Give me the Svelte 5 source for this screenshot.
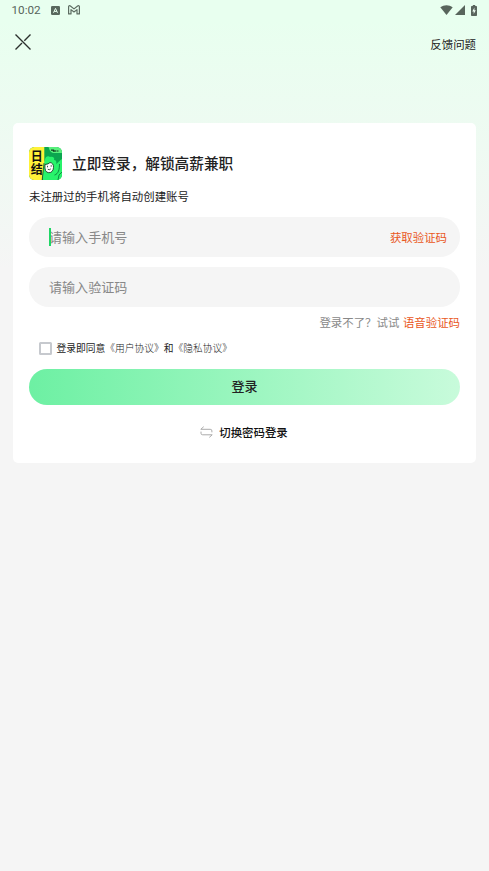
<script lang="ts">
	let phone = $state('');
	let code = $state('');
	let agreed = $state(false);
</script>

<main class="page">
	<header class="status">
		<div class="status-left">
			<span class="time">10:02</span>
			<svg class="badge" width="9" height="9" viewBox="0 0 9 9">
				<rect width="9" height="9" rx="1.3" fill="#58685d" />
				<path d="M2.5 6.8 4.5 2.4l2 4.4M3.2 5.4h2.6" fill="none" stroke="#e8ffef" stroke-width="1" />
			</svg>
			<svg width="12" height="10" viewBox="0 0 12 10" fill="none" stroke="#5c6c61" stroke-width="1.2" stroke-linejoin="round">
				<path d="M.6 8.9V1.7C.6.8 1.6.4 2.4 1L6 3.9 9.6 1c.8-.6 1.8-.2 1.8.7v7.2H9V4.6L6 7 3 4.6v4.3Z" />
			</svg>
		</div>
		<div class="status-right">
			<svg width="13" height="10" viewBox="0 0 13 10" fill="#58655c">
				<path d="M6.5 10 .3 2.3C4-.5 9-.5 12.7 2.3Z" />
			</svg>
			<svg width="10" height="10" viewBox="0 0 10 10" fill="#58655c">
				<path d="M10 0v10H0Z" />
			</svg>
			<svg class="battery" width="6" height="11" viewBox="0 0 6 11">
				<path d="M1.8 0h2.4v1H5.2q.8 0 .8.8v8.4q0 .8-.8.8H.8Q0 11 0 10.2V1.8Q0 1 .8 1h1Z" fill="#58655c" />
				<path d="M3.4 2.6 1.3 6.4h1.4v2.7l2.1-3.8H3.4Z" fill="#f0fff4" />
			</svg>
		</div>
	</header>

	<nav class="nav">
		<button class="close" aria-label="关闭">
			<svg width="16" height="16" viewBox="0 0 16 16" fill="none" stroke="#2b302d" stroke-width="1.35">
				<path d="M.5.5 15.5 15.5M.5 15.5 7 9M9.3 6.7 15.5.5" />
			</svg>
		</button>
		<button class="feedback">反馈问题</button>
	</nav>

	<section class="card">
		<div class="brand">
			<svg class="logo" width="33" height="33" viewBox="0 0 33 33">
				<defs>
					<clipPath id="logo-clip"><rect width="33" height="33" rx="5.5" /></clipPath>
				</defs>
				<g clip-path="url(#logo-clip)">
					<rect width="33" height="33" fill="#0ba64f" />
					<path d="M14 33V17l2-4c0-3 3-5 5-3 3-1 5 1 4 3 2 0 3 2 2 4 2-1 4-4 6-5v21Z" fill="#28f36b" />
					<path d="M19.5 0H33v6h-8q-4 0-5.5-6Z" fill="#58f07c" />
					<path d="M22 3.2h2.5v1.6M26 3v2M27.5 4h2" fill="none" stroke="#123c20" stroke-width="1.2" />
					<path d="M25.5 28c4-1 5-6 5-11M29 33l1-5 3-3" fill="none" stroke="#087438" stroke-width=".8" />
					<path d="M16 17.5q3.5-.2 5-2 3.8.8 3.5 5-.5 5.2-4.7 5.2-4.6-.2-3.8-8.2Z" fill="#fff" stroke="#132b1b" stroke-width=".8" />
					<path d="M18.5 18.8v1.5M22.2 18.2v1.5M18.8 22.3q1.7 1 3-.4" fill="none" stroke="#132b1b" stroke-width=".8" />
					<path d="M0 0h15.3v15L13 33H0Z" fill="#fff238" />
					<path d="m15 16-1.8 17" stroke="#174927" stroke-width=".8" />
					<text x="7.8" y="3.6">日结</text>
				</g>
			</svg>
			<h1>立即登录，解锁高薪兼职</h1>
		</div>
		<p class="hint">未注册过的手机将自动创建账号</p>

		<div class="field">
			<span class="caret"></span>
			<input type="tel" placeholder="请输入手机号" bind:value={phone} />
			<button class="link">获取验证码</button>
		</div>
		<div class="field">
			<input type="text" placeholder="请输入验证码" bind:value={code} />
		</div>

		<div class="help">登录不了？试试<button class="link">语音验证码</button></div>

		<label class="terms">
			<input type="checkbox" bind:checked={agreed} />
			<span>登录即同意<span class="doc">《用户协议》</span>和<span class="doc">《隐私协议》</span></span>
		</label>

		<button class="submit">登录</button>

		<button class="switch">
			<svg width="13" height="12" viewBox="0 0 13 12" fill="none" stroke="#aaa" stroke-width="1">
				<path d="M3.7.7.8 3.3h9.4q1.7 0 1.7 1.6v1.4M1 5.6v1.7q0 1.5 1.7 1.5h9.5L9.3 11.4" />
			</svg>
			切换密码登录
		</button>
	</section>
</main>

<style>
	:global(body) {
		margin: 0;
		background: #f5f5f5;
	}

	.page {
		box-sizing: border-box;
		min-height: 871px;
		background: linear-gradient(#e8ffef 0, #e8ffef 20px, #f5f5f5 270px);
		color: #222;
		font-family: 'Noto Sans CJK SC', sans-serif;
		font-size: 11.43px;
	}

	button,
	input {
		margin: 0;
		padding: 0;
		border: 0;
		background: none;
		color: inherit;
		font: inherit;
	}

	svg {
		display: block;
		flex: none;
	}

	.status,
	.status-left,
	.status-right,
	.nav,
	.brand,
	.field,
	.terms,
	.switch {
		display: flex;
		align-items: center;
	}

	.status {
		justify-content: space-between;
		height: 20px;
		padding: 0 12px 0 11.5px;
	}

	.time {
		width: 39.5px;
		color: #58655c;
		font: 400 11.7px/20px Roboto, sans-serif;
	}

	.badge {
		margin-right: 7.5px;
	}

	.status-right {
		gap: 2px;
	}

	.battery {
		margin-left: 4px;
	}

	.nav {
		justify-content: space-between;
		height: 46px;
		padding: 0 13px 0 15px;
	}

	.close {
		margin-top: -2px;
	}

	.feedback {
		margin-top: 2px;
		line-height: 20px;
	}

	.card {
		box-sizing: border-box;
		height: 340px;
		margin: 56.5px 13px 0;
		padding: 24.5px 16px 0;
		border-radius: 5px;
		background: #fff;
	}

	.brand {
		gap: 10px;
		height: 33px;
	}

	.logo text {
		fill: #111;
		font-size: 12px;
		font-weight: 700;
		letter-spacing: 0.4px;
		writing-mode: vertical-rl;
	}

	h1 {
		margin: -2px 0 0;
		font-size: 14.67px;
		font-weight: 500;
		line-height: 22px;
	}

	.hint {
		margin: 7px 0 11px;
		line-height: 19px;
	}

	.field {
		position: relative;
		box-sizing: border-box;
		height: 40px;
		margin-bottom: 10px;
		padding: 0 13px 1px 20px;
		border-radius: 20px;
		background: #f5f5f5;

		& input {
			flex: 1;
			min-width: 0;
			margin-top: -1px;
			outline: 0;
			font-size: 13.05px;
		}

		& input::placeholder {
			color: #888;
			opacity: 1;
		}
	}

	.caret {
		position: absolute;
		top: 11px;
		left: 20px;
		width: 1.5px;
		height: 18px;
		background: #1fd665;
	}

	.link {
		color: #e9571c;
	}

	.help {
		margin-top: -4.5px;
		color: #888;
		line-height: 19px;
		text-align: right;

		& .link {
			margin-left: 3.5px;
		}
	}

	.terms {
		gap: 5px;
		height: 16px;
		margin: 8.5px 0 12.5px 9.5px;
		font-size: 9.75px;

		& input {
			box-sizing: border-box;
			width: 13px;
			height: 13px;
			border: 2px solid #c6c9ce;
			border-radius: 1.5px;
			appearance: none;
		}

		& input:checked {
			background: #6df0a3;
		}
	}

	.doc {
		font-weight: 300;
	}

	.submit {
		display: block;
		width: 100%;
		height: 36px;
		padding-bottom: 2px;
		border-radius: 18px;
		background: linear-gradient(90deg, #6df0a3, #c8fbdb);
		font-size: 13.05px;
		font-weight: 500;
	}

	.switch {
		gap: 6px;
		margin: 17px auto 0;
		padding-right: 1px;
		color: #111;
		font-weight: 500;
		line-height: 20px;
	}
</style>
